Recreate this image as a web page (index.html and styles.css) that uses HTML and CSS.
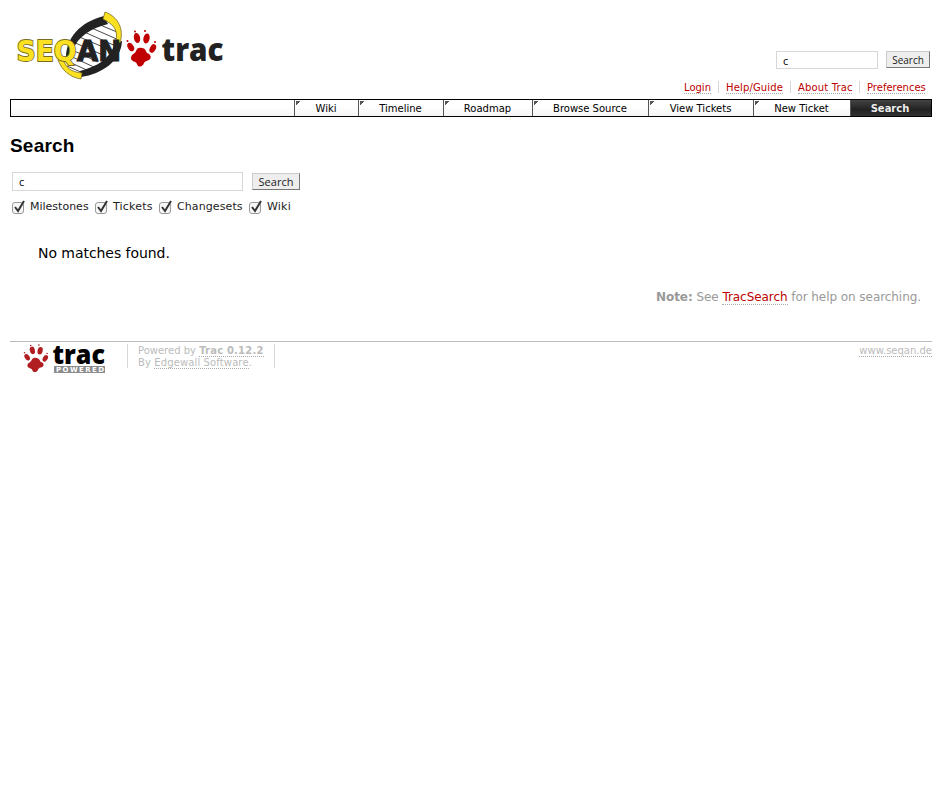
FILE: index.html
```html
<!DOCTYPE html>
<html lang="en">
<head>
<meta charset="utf-8">
<title>Search – SeqAn</title>
<link rel="stylesheet" href="styles.css">
</head>
<body>
<header class="banner">
  <a class="logo" aria-label="SeqAn Trac">
    <svg width="220" height="76" viewBox="8 8 220 76">
      <g stroke="#333" stroke-width=".9" fill="none">
        <path d="M93 22l24 10M87 26l32 14M82 31l36 16M77 36l38 16M73 42l30 13M70 49l28 13M68 55l28 13M67 61l22 10M67 66l16 7"/>
      </g>
      <path d="M66 58C66 38 80 22 104 16L108 24C92 28 78 36 73 50L71 60Z" fill="#222"/>
      <path d="M122 41C121 61 102 74 81 77L80 71C98 66 110 59 115 43Z" fill="#222"/>
      <path d="M105 12C119 17 124 30 120 43L116 41C118 31 115 25 103 19Z" fill="#fbe122" stroke="#776c20" stroke-width=".8"/>
      <path d="M63 59C66 68 71 72 82 73L81 79C69 77 62 70 58 60Z" fill="#fbe122" stroke="#776c20" stroke-width=".8"/>
      <text class="seq" x="16.500" y="61" textLength="60" lengthAdjust="spacingAndGlyphs">SEQ</text>
      <text class="an" x="77" y="61" textLength="44" lengthAdjust="spacingAndGlyphs">AN</text>
      <g id="paw">
        <ellipse cx="137" cy="38" rx="3.100" ry="5" transform="rotate(-12 137 38)"/>
        <ellipse cx="146.500" cy="38.500" rx="3.100" ry="5" transform="rotate(12 146.500 38.500)"/>
        <ellipse cx="130.700" cy="47" rx="2.900" ry="4.600" transform="rotate(-30 130.700 47)"/>
        <ellipse cx="152.800" cy="48.500" rx="2.900" ry="4.600" transform="rotate(27 152.800 48.500)"/>
        <circle cx="135" cy="31.500" r="1"/><circle cx="145" cy="31" r="1"/><circle cx="127.500" cy="41" r="1"/><circle cx="155" cy="42" r="1"/>
        <path d="M142 48C145 48 146 51 147 53C151 54 152 58 149 60C147 61 145 61 144 63C143 67 138 68 137 64C136 61 131 62 131 58C131 54 135 54 136 51C137 48 139 47 142 48Z"/>
      </g>
      <text class="trac" x="161.500" y="60.500" textLength="62" lengthAdjust="spacingAndGlyphs">trac</text>
    </svg>
  </a>
  <div class="tools">
    <form class="search"><input class="field small" type="text" value="c" aria-label="Search"><button class="btn mini" type="button">Search</button></form>
    <ul class="metanav">
      <li><a>Login</a></li><li><a>Help/Guide</a></li><li><a>About Trac</a></li><li><a>Preferences</a></li>
    </ul>
  </div>
</header>
<nav class="mainnav">
  <a class="wiki"><span>Wiki</span></a><a class="timeline"><span>Timeline</span></a><a class="roadmap"><span>Roadmap</span></a><a class="browse"><span>Browse Source</span></a><a class="tickets"><span>View Tickets</span></a><a class="new"><span>New Ticket</span></a><a class="active"><span>Search</span></a>
</nav>
<main>
  <h1>Search</h1>
  <form>
    <div class="query"><input class="field wide" type="text" value="c" aria-label="Query"><button class="btn" type="button">Search</button></div>
    <div class="filters">
      <label class="f1"><svg width="16" height="16" viewBox="0 0 16 16"><rect class="box" x="1.500" y="3.500" width="11" height="11" rx="2.500"/><path class="tick" d="M4 8L7 12L13 2"/></svg><span>Milestones</span></label>
      <label class="f2"><svg width="16" height="16" viewBox="0 0 16 16"><rect class="box" x="1.500" y="3.500" width="11" height="11" rx="2.500"/><path class="tick" d="M4 8L7 12L13 2"/></svg><span>Tickets</span></label>
      <label class="f3"><svg width="16" height="16" viewBox="0 0 16 16"><rect class="box" x="1.500" y="3.500" width="11" height="11" rx="2.500"/><path class="tick" d="M4 8L7 12L13 2"/></svg><span>Changesets</span></label>
      <label class="f4"><svg width="16" height="16" viewBox="0 0 16 16"><rect class="box" x="1.500" y="3.500" width="11" height="11" rx="2.500"/><path class="tick" d="M4 8L7 12L13 2"/></svg><span>Wiki</span></label>
    </div>
  </form>
  <p class="empty"><span>No matches found.</span></p>
  <p class="help"><strong>Note:</strong> See <a>TracSearch</a> for help on searching.</p>
</main>
<footer>
  <a class="powered-logo" aria-label="Trac Powered">
    <svg width="84" height="31" viewBox="22 343 84 31">
      <g class="footer-paw" transform="translate(-80 321.500) scale(.82 .76)"><use href="#paw"/></g>
      <text class="trac-small" x="52.500" y="364" textLength="52.500" lengthAdjust="spacingAndGlyphs">trac</text>
      <rect x="54" y="366" width="51" height="7" fill="#8c8c8c"/>
      <text class="powered" x="56" y="372" textLength="48">POWERED</text>
    </svg>
  </a>
  <p class="credits"><span>Powered by <a><strong>Trac 0.12.2</strong></a></span><br><span class="by">By <a>Edgewall Software</a>.</span></p>
  <p class="site"><a>www.seqan.de</a></p>
</footer>
</body>
</html>
```
FILE: styles.css
```css
* { box-sizing: border-box; }
body { margin: 8px 10px 0; background: #fff; color: #000; font-family: Verdana, "DejaVu Sans", sans-serif; font-size: 13px; }
p, ul { margin: 0; padding: 0; }
svg { display: block; }
.banner { display: flex; justify-content: space-between; height: 91px; }
.logo { margin-left: -2px; fill: #c00000; }
.seq, .an { font: bold 29px "DejaVu Sans", sans-serif; paint-order: stroke; }
.seq { fill: #fbe122; stroke: #776c20; stroke-width: 1.8; }
.an { fill: #222; stroke: #222; stroke-width: 1.2; }
.trac { font: 800 31px "Open Sans", sans-serif; fill: #222; }
.tools { padding-top: 43px; }
.search { display: flex; justify-content: flex-end; gap: 8px; padding-right: 2px; }
.field { height: 18px; border: 1px solid #d7d7d7; padding: 0 6px; font: 11px "Open Sans", sans-serif; color: #000; background: #fff; border-radius: 0; }
.small { width: 102px; }
.btn { height: 17px; padding: 0; border: 1px solid #ccc; border-right-color: #777; border-bottom-color: #777; background: #eee; color: #222; font: 11px/14px "Open Sans", sans-serif; border-radius: 0; }
.mini { width: 44px; font-size: 10px; }
.metanav { display: flex; justify-content: flex-end; list-style: none; font-size: 10px; line-height: 12px; margin-top: 12px; padding-right: 7px; }
.metanav a { display: block; height: 13px; padding-top: 1px; }
.metanav li { height: 12px; }
.metanav li:first-child { width: 27px; margin-right: 0; }
.metanav li:nth-child(2) a { letter-spacing: .15px; width: 57px; white-space: nowrap; }
.metanav li:nth-child(3) a { letter-spacing: .15px; width: 54px; white-space: nowrap; }
.metanav li:nth-child(4) a { width: 58px; }
.metanav li + li { border-left: 1px solid #d7d7d7; margin-left: 7px; padding-left: 7px; }
a { border-bottom: 1px dotted #aaa; color: #b00; }
.logo, .powered-logo, .mainnav a { border: 0; }
.mainnav { display: flex; justify-content: flex-end; height: 18px; border: 1px solid #000; background: linear-gradient(#fff, #fff 40%, #f4f4f4); font-size: 10px; line-height: 18px; }
.mainnav a { border-left: 1px solid #555; padding-right: 1px; color: #000; text-align: center; background: linear-gradient(135deg, #555 3px, transparent 3.500px) 1px 1px / 5px 5px no-repeat; }
.wiki { width: 64px; } .timeline { width: 85px; } .roadmap { width: 89px; } .browse { width: 116px; } .tickets { width: 105px; } .new { width: 97px; }
.mainnav .active { width: 81px; padding-right: 2px; color: #eee; font-weight: bold; background: linear-gradient(#444, #222 60%, #333); }
h1 { margin: 18px 0 0; font: bold 19px/21px "Liberation Sans", sans-serif; letter-spacing: .2px; }
.query { display: flex; gap: 9px; margin: 16px 0 0 2px; }
.wide { width: 231px; height: 19px; }
.query .btn { width: 48px; margin-top: 1px; }
.filters { display: flex; margin: 8px 0 0 1px; font-size: 11px; line-height: 15px; color: #222; }
.filters label { display: flex; gap: 3px; }
.f1 { width: 83px; } .f2 { width: 64px; } .f3 { width: 90px; }
.f2 span, .f4 span { letter-spacing: .2px; }
.f3 span { letter-spacing: .1px; }
.box { fill: #f7f7f7; stroke: #999; }
.tick { fill: none; stroke: #333; stroke-width: 2; }
.empty { margin: 29px 0 0 28px; font-size: 14px; line-height: 18px; letter-spacing: -.05px; }
.help { margin: 28px 11px 0 0; text-align: right; color: #999; font-size: 12px; line-height: 15px; letter-spacing: -.06px; }
footer { display: flex; height: 33px; margin-top: 36px; border-top: 1px solid #bbb; color: #bbb; font-size: 10px; line-height: 12px; }
footer a { color: #bbb; }
.powered-logo { margin: 1px 0 0 12px; }
.footer-paw { fill: #b01e22; }
.trac-small { font: 800 27px "Open Sans", sans-serif; fill: #000; }
.powered { font: bold 7px "DejaVu Sans", sans-serif; fill: #fff; }
.credits { height: 24px; width: 148px; margin: 2px 0 0 21px; padding-left: 10px; border: solid #d7d7d7; border-width: 0 1px; white-space: nowrap; }
.credits span { position: relative; top: 1px; }
.credits strong { letter-spacing: .2px; }
.by { letter-spacing: .12px; }
.site { margin: 3px 0 0 auto; }
```
